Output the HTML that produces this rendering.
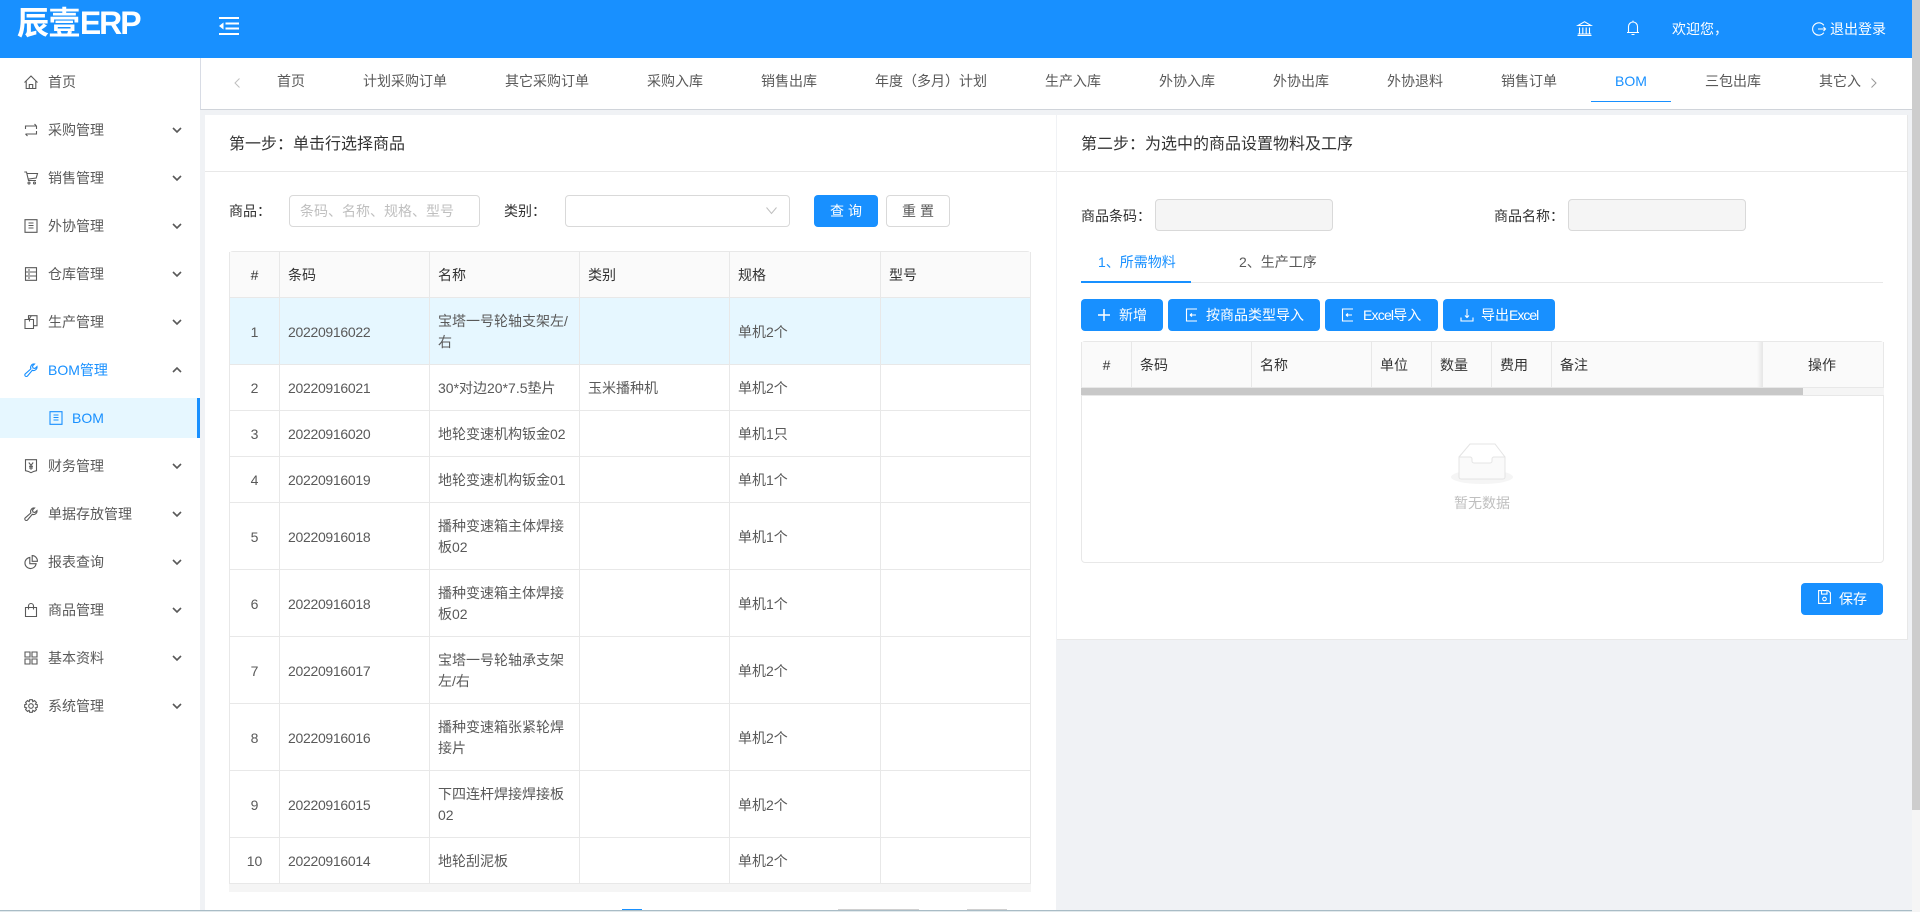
<!DOCTYPE html>
<html lang="zh-CN">
<head>
<meta charset="utf-8">
<title>辰壹ERP</title>
<style>
*{box-sizing:border-box}
html,body{margin:0;padding:0;width:1920px;height:912px;overflow:hidden;background:#f0f2f5}
body{position:relative;font-family:"Liberation Sans","Noto Sans CJK SC",sans-serif;font-size:14px;color:#595959}
.a{position:absolute}
.t{position:absolute;white-space:nowrap;line-height:20px;height:20px}
svg{position:absolute;fill:none;display:block;overflow:visible}
.m{left:48px;color:#595959}
.i{left:24px;width:14px;height:14px;stroke:#595959;stroke-width:1.1}
.c{left:172px;width:10px;height:6px;stroke:#595959;stroke-width:1.6}
.tab{top:71px;color:#595959}
.btn{position:absolute;background:#1890ff;border-radius:4px;height:32px}
.w{color:#fff}
.iw{stroke:#fff;stroke-width:1.1;width:14px;height:14px}
.dark{color:#333}
table{position:absolute;border-collapse:separate;border-spacing:0;table-layout:fixed;background:#fff}
td,th{border-right:1px solid #e8e8e8;border-bottom:1px solid #e8e8e8;padding:2px 0 0 8px;font-weight:400;text-align:left;vertical-align:middle;line-height:21px;overflow:hidden;white-space:nowrap}
th{background:#fafafa;color:#333}
td.n,th.n{text-align:center;padding:2px 0 0 0}
.num{letter-spacing:-.3px}
.r46 td{height:46px}
.r67 td{height:67px}
.sel td{background:#e6f7ff}
</style>
</head>
<body>

<!-- header -->
<div class="a" style="left:0;top:0;width:1912px;height:58px;background:#1890ff"></div>
<div class="t" style="left:17px;top:3px;height:40px;line-height:40px;font-size:32px;font-weight:700;color:#fff;letter-spacing:-.6px">辰壹<span style="letter-spacing:-2px">ERP</span></div>
<svg style="left:219px;top:17px;width:20px;height:18px" viewBox="0 0 20 18"><path d="M0 1h20M6.500 6.500h13.500M6.500 11.500h13.500M0 17h20" stroke="#fff" stroke-width="2"/><path d="M0 9l4.500-3.500v7z" fill="#fff"/></svg>
<svg class="iw" style="left:1577px;top:21px;width:15px;height:15px" viewBox="0 0 15 15"><path d="M7.500 .7L14 4.500H1zM2.500 6.500v6M5.800 6.500v6M9.200 6.500v6M12.500 6.500v6M.8 13h13.400M.5 14.500h14"/></svg>
<svg class="iw" style="left:1626px;top:20px;width:14px;height:16px" viewBox="0 0 14 16"><path d="M7 .6v1.400M2.500 12V6.500a4.500 4.500 0 0 1 9 0V12M1 12.500h12M5.500 14.500h3"/></svg>
<div class="t w" style="left:1672px;top:19px">欢迎您，</div>
<svg class="iw" style="left:1812px;top:22px" viewBox="0 0 14 14"><path d="M11.800 3.300A6.200 6.200 0 1 0 11.800 10.700M6 7h7.500M11.500 5l2 2-2 2"/></svg>
<div class="t w" style="left:1830px;top:19px">退出登录</div>

<!-- scrollbar -->
<div class="a" style="left:1912px;top:0;width:8px;height:912px;background:#f5f5f5"></div>
<div class="a" style="left:1912px;top:0;width:8px;height:810px;background:#cdcdcd"></div>

<!-- sidebar -->
<div class="a" style="left:0;top:58px;width:200px;height:854px;background:#fff"></div>
<div class="a" style="left:0;top:398px;width:200px;height:40px;background:#e6f7ff"></div>
<div class="a" style="left:197px;top:398px;width:3px;height:40px;background:#1890ff"></div>

<svg class="i" style="top:75px" viewBox="0 0 14 14"><path d="M.5 7.500L7 1l6.500 6.500M2.200 6.200V13.500h9.600V6.200M5.300 13.500V9.500h3.400v4"/></svg>
<div class="t m" style="top:72px">首页</div>

<svg class="i" style="top:123px" viewBox="0 0 14 14"><path d="M1.500 6V3h11M10.500 1l2 2M12.500 8v3h-11M3.500 13l-2-2"/><path d="M12.500 3v3"/></svg>
<div class="t m" style="top:120px">采购管理</div>
<svg class="c" style="top:127px" viewBox="0 0 10 6"><path d="M1 1l4 4 4-4"/></svg>

<svg class="i" style="top:171px" viewBox="0 0 14 14"><path d="M.3 1h2.200l2 8.500h7.500M2.800 2.500h10.700l-1.300 4.500-7.500 1"/><circle cx="5" cy="12" r="1"/><circle cx="10.500" cy="12" r="1"/></svg>
<div class="t m" style="top:168px">销售管理</div>
<svg class="c" style="top:175px" viewBox="0 0 10 6"><path d="M1 1l4 4 4-4"/></svg>

<svg class="i" style="top:219px;" viewBox="0 0 14 14"><path d="M1 .7h12v12.600H1zM4.500 4h5M4.500 6.500h5M4.500 9h5"/></svg>
<div class="t m" style="top:216px">外协管理</div>
<svg class="c" style="top:223px" viewBox="0 0 10 6"><path d="M1 1l4 4 4-4"/></svg>

<svg class="i" style="top:267px" viewBox="0 0 14 14"><path d="M1.500.7h11v12.600h-11zM1.500 5h11M1.500 9h11M4 3h2M4 7h2M4 11h2"/></svg>
<div class="t m" style="top:264px">仓库管理</div>
<svg class="c" style="top:271px" viewBox="0 0 10 6"><path d="M1 1l4 4 4-4"/></svg>

<svg class="i" style="top:315px" viewBox="0 0 14 14"><path d="M1 4.500h8.500v9H1zM4.500 4V.7h8.500v10h-3M5.500 6.500v-3l2-3"/></svg>
<div class="t m" style="top:312px">生产管理</div>
<svg class="c" style="top:319px" viewBox="0 0 10 6"><path d="M1 1l4 4 4-4"/></svg>

<svg class="i" style="top:363px;stroke:#1890ff" viewBox="0 0 14 14"><path d="M13 3.500a3.500 3.500 0 0 1-4.700 3.800L3.500 13a1.300 1.300 0 0 1-2.300-2.100l5.700-5A3.500 3.500 0 0 1 10.500 1L8.500 3l.5 2 2 .5z"/></svg>
<div class="t" style="left:48px;top:360px;color:#1890ff">BOM管理</div>
<svg class="c" style="top:367px" viewBox="0 0 10 6"><path d="M1 5l4-4 4 4"/></svg>

<svg class="i" style="left:49px;top:411px;stroke:#1890ff" viewBox="0 0 14 14"><path d="M1 .7h12v12.600H1zM4.500 4h5M4.500 6.500h5M4.500 9h5"/></svg>
<div class="t" style="left:72px;top:408px;color:#1890ff">BOM</div>

<svg class="i" style="top:459px" viewBox="0 0 14 14"><path d="M1.500.7h11v11l-3 .8-2.500 1.200-2.500-1.200-3-.8zM4.800 3.500L7 6.300l2.200-2.800M7 6.300v4.500M5 7.300h4M5 9h4"/></svg>
<div class="t m" style="top:456px">财务管理</div>
<svg class="c" style="top:463px" viewBox="0 0 10 6"><path d="M1 1l4 4 4-4"/></svg>

<svg class="i" style="top:507px" viewBox="0 0 14 14"><path d="M13 3.500a3.500 3.500 0 0 1-4.700 3.800L3.500 13a1.300 1.300 0 0 1-2.300-2.100l5.700-5A3.500 3.500 0 0 1 10.500 1L8.500 3l.5 2 2 .5z"/></svg>
<div class="t m" style="top:504px">单据存放管理</div>
<svg class="c" style="top:511px" viewBox="0 0 10 6"><path d="M1 1l4 4 4-4"/></svg>

<svg class="i" style="top:555px" viewBox="0 0 14 14"><path d="M5.800 2.400a5.600 5.600 0 1 0 6.300 6.300H5.800z"/><path d="M8.200.6a5.300 5.300 0 0 1 5.200 5.700H8.200z"/></svg>
<div class="t m" style="top:552px">报表查询</div>
<svg class="c" style="top:559px" viewBox="0 0 10 6"><path d="M1 1l4 4 4-4"/></svg>

<svg class="i" style="top:603px" viewBox="0 0 14 14"><path d="M1.500 4.500h11v9h-11zM4.500 6.500V3a2.500 2.500 0 0 1 5 0v3.500"/></svg>
<div class="t m" style="top:600px">商品管理</div>
<svg class="c" style="top:607px" viewBox="0 0 10 6"><path d="M1 1l4 4 4-4"/></svg>

<svg class="i" style="top:651px" viewBox="0 0 14 14"><path d="M1 1h5v5H1zM8 1h5v5H8zM1 8h5v5H1zM8 8h5v5H8z"/></svg>
<div class="t m" style="top:648px">基本资料</div>
<svg class="c" style="top:655px" viewBox="0 0 10 6"><path d="M1 1l4 4 4-4"/></svg>

<svg class="i" style="top:699px" viewBox="0 0 14 14"><path d="M5.700.7h2.600l.5 1.900 1.700-1 1.900 1.900-1 1.700 1.900.5v2.600l-1.900.5 1 1.700-1.900 1.900-1.700-1-.5 1.900H5.700l-.5-1.900-1.700 1-1.900-1.900 1-1.700L.7 8.300V5.700l1.900-.5-1-1.700 1.900-1.900 1.700 1z"/><circle cx="7" cy="7" r="2.300"/></svg>
<div class="t m" style="top:696px">系统管理</div>
<svg class="c" style="top:703px" viewBox="0 0 10 6"><path d="M1 1l4 4 4-4"/></svg>

<!-- tab bar -->
<div class="a" style="left:200px;top:58px;width:1712px;height:52px;background:#fff;border-left:1px solid #d8dce5;border-bottom:1px solid #d0d4da"></div>
<svg style="left:234px;top:78px;width:6px;height:10px;stroke:#bfbfbf;stroke-width:1" viewBox="0 0 6 10"><path d="M5.500 .5L1 5l4.500 4.500"/></svg>
<div class="t tab" style="left:277px">首页</div>
<div class="t tab" style="left:363px">计划采购订单</div>
<div class="t tab" style="left:505px">其它采购订单</div>
<div class="t tab" style="left:647px">采购入库</div>
<div class="t tab" style="left:761px">销售出库</div>
<div class="t tab" style="left:875px">年度（多月）计划</div>
<div class="t tab" style="left:1045px">生产入库</div>
<div class="t tab" style="left:1159px">外协入库</div>
<div class="t tab" style="left:1273px">外协出库</div>
<div class="t tab" style="left:1387px">外协退料</div>
<div class="t tab" style="left:1501px">销售订单</div>
<div class="t tab" style="left:1615px;color:#1890ff">BOM</div>
<div class="a" style="left:1591px;top:101px;width:80px;height:1px;background:#1890ff"></div>
<div class="t tab" style="left:1705px">三包出库</div>
<div class="t tab" style="left:1819px">其它入</div>
<svg style="left:1871px;top:78px;width:6px;height:10px;stroke:#999;stroke-width:1" viewBox="0 0 6 10"><path d="M.5 .5L5 5 .5 9.500"/></svg>

<!-- left panel -->
<div class="a" style="left:205px;top:115px;width:851px;height:795px;background:#fff"></div>
<div class="a" style="left:205px;top:171px;width:851px;height:1px;background:#e8e8e8"></div>
<div class="t dark" style="left:229px;top:135px;font-size:16px">第一步：单击行选择商品</div>

<div class="t dark" style="left:229px;top:201px">商品：</div>
<div class="a" style="left:289px;top:195px;width:191px;height:32px;border:1px solid #d9d9d9;border-radius:4px;background:#fff"></div>
<div class="t" style="left:300px;top:201px;color:#bfbfbf">条码、名称、规格、型号</div>
<div class="t dark" style="left:504px;top:201px">类别：</div>
<div class="a" style="left:565px;top:195px;width:225px;height:32px;border:1px solid #d9d9d9;border-radius:4px;background:#fff"></div>
<svg style="left:766px;top:207px;width:11px;height:7px;stroke:#bfbfbf;stroke-width:1" viewBox="0 0 11 7"><path d="M.5 .5l5 6 5-6"/></svg>
<div class="btn" style="left:814px;top:195px;width:64px"></div>
<div class="t w" style="left:830px;top:201px;letter-spacing:4px">查询</div>
<div class="a" style="left:886px;top:195px;width:64px;height:32px;border:1px solid #d9d9d9;border-radius:4px;background:#fff"></div>
<div class="t" style="left:902px;top:201px;letter-spacing:4px">重置</div>

<div class="a" style="left:229px;top:251px;width:802px;height:47px;border:1px solid #e8e8e8;border-bottom:0;border-radius:4px 4px 0 0;background:#fafafa"></div>
<table style="left:229px;top:252px;width:802px;border-left:1px solid #e8e8e8">
<colgroup><col style="width:50px"><col style="width:150px"><col style="width:150px"><col style="width:150px"><col style="width:151px"><col style="width:150px"></colgroup>
<tr class="r46"><th class="n" style="height:46px">#</th><th>条码</th><th>名称</th><th>类别</th><th>规格</th><th>型号</th></tr>
<tr class="r67 sel"><td class="n">1</td><td class="num">20220916022</td><td>宝塔一号轮轴支架左/<br>右</td><td></td><td>单机2个</td><td></td></tr>
<tr class="r46"><td class="n">2</td><td class="num">20220916021</td><td>30*对边20*7.5垫片</td><td>玉米播种机</td><td>单机2个</td><td></td></tr>
<tr class="r46"><td class="n">3</td><td class="num">20220916020</td><td>地轮变速机构钣金02</td><td></td><td>单机1只</td><td></td></tr>
<tr class="r46"><td class="n">4</td><td class="num">20220916019</td><td>地轮变速机构钣金01</td><td></td><td>单机1个</td><td></td></tr>
<tr class="r67"><td class="n">5</td><td class="num">20220916018</td><td>播种变速箱主体焊接<br>板02</td><td></td><td>单机1个</td><td></td></tr>
<tr class="r67"><td class="n">6</td><td class="num">20220916018</td><td>播种变速箱主体焊接<br>板02</td><td></td><td>单机1个</td><td></td></tr>
<tr class="r67"><td class="n">7</td><td class="num">20220916017</td><td>宝塔一号轮轴承支架<br>左/右</td><td></td><td>单机2个</td><td></td></tr>
<tr class="r67"><td class="n">8</td><td class="num">20220916016</td><td>播种变速箱张紧轮焊<br>接片</td><td></td><td>单机2个</td><td></td></tr>
<tr class="r67"><td class="n">9</td><td class="num">20220916015</td><td>下四连杆焊接焊接板<br>02</td><td></td><td>单机2个</td><td></td></tr>
<tr class="r46"><td class="n">10</td><td class="num">20220916014</td><td>地轮刮泥板</td><td></td><td>单机2个</td><td></td></tr>
</table>
<div class="a" style="left:229px;top:884px;width:802px;height:8px;background:#f5f5f5"></div>

<!-- right panel -->
<div class="a" style="left:1057px;top:115px;width:851px;height:525px;background:#fff;border-bottom:1px solid #e8e8e8;border-right:1px solid #e8e8e8"></div>
<div class="a" style="left:1057px;top:171px;width:850px;height:1px;background:#e8e8e8"></div>
<div class="t dark" style="left:1081px;top:135px;font-size:16px">第二步：为选中的商品设置物料及工序</div>

<div class="t dark" style="left:1081px;top:206px">商品条码：</div>
<div class="a" style="left:1155px;top:199px;width:178px;height:32px;border:1px solid #d9d9d9;border-radius:4px;background:#f5f5f5"></div>
<div class="t dark" style="left:1494px;top:206px">商品名称：</div>
<div class="a" style="left:1568px;top:199px;width:178px;height:32px;border:1px solid #d9d9d9;border-radius:4px;background:#f5f5f5"></div>

<div class="t" style="left:1098px;top:252px;color:#1890ff">1、所需物料</div>
<div class="t" style="left:1239px;top:252px">2、生产工序</div>
<div class="a" style="left:1081px;top:282px;width:802px;height:1px;background:#e8e8e8"></div>
<div class="a" style="left:1081px;top:281px;width:110px;height:2px;background:#1890ff"></div>

<div class="btn" style="left:1081px;top:299px;width:82px"></div>
<svg class="iw" style="left:1098px;top:309px;width:12px;height:12px;stroke-width:1.5" viewBox="0 0 12 12"><path d="M6 0v12M0 6h12"/></svg>
<div class="t w" style="left:1119px;top:305px">新增</div>

<div class="btn" style="left:1168px;top:299px;width:152px"></div>
<svg class="iw" style="left:1185px;top:308px" viewBox="0 0 14 14"><path d="M12 1H1.500v12H12M5 7h6M5 7l2-1.500M5 7l2 1.500"/></svg>
<div class="t w" style="left:1206px;top:305px">按商品类型导入</div>

<div class="btn" style="left:1325px;top:299px;width:113px"></div>
<svg class="iw" style="left:1341px;top:308px" viewBox="0 0 14 14"><path d="M12 1H1.500v12H12M5 7h6M5 7l2-1.500M5 7l2 1.500"/></svg>
<div class="t w" style="left:1363px;top:305px"><span style="letter-spacing:-.8px">Excel</span>导入</div>

<div class="btn" style="left:1443px;top:299px;width:112px"></div>
<svg class="iw" style="left:1460px;top:308px" viewBox="0 0 14 14"><path d="M7 1v8.500M5 7.500l2 2 2-2M1 9.500V13h12V9.500"/></svg>
<div class="t w" style="left:1481px;top:305px">导出<span style="letter-spacing:-1px">Excel</span></div>

<div class="a" style="left:1081px;top:341px;width:803px;height:47px;border:1px solid #e8e8e8;border-bottom:0;border-radius:4px 4px 0 0;background:#fafafa"></div>
<table style="left:1081px;top:342px;width:803px;border-left:1px solid #e8e8e8">
<colgroup><col style="width:50px"><col style="width:120px"><col style="width:120px"><col style="width:60px"><col style="width:60px"><col style="width:60px"><col></colgroup>
<tr><th class="n" style="height:46px">#</th><th>条码</th><th>名称</th><th>单位</th><th>数量</th><th>费用</th><th>备注</th></tr>
</table>
<div class="a" style="left:1757px;top:342px;width:5px;height:45px;background:linear-gradient(to right,rgba(0,0,0,0),rgba(0,0,0,.07))"></div>
<div class="a" style="left:1762px;top:342px;width:122px;height:46px;background:#fafafa;border-bottom:1px solid #e8e8e8;border-right:1px solid #e8e8e8;border-left:1px solid #e8e8e8"></div>
<div class="t dark" style="left:1808px;top:355px">操作</div>
<div class="a" style="left:1081px;top:388px;width:803px;height:8px;background:#f5f5f5"></div>
<div class="a" style="left:1081px;top:388px;width:722px;height:7px;background:#c8c8c8"></div>
<div class="a" style="left:1081px;top:395px;width:803px;height:168px;border:1px solid #e8e8e8;border-radius:0 0 4px 4px;background:#fff"></div>
<svg style="left:1450px;top:443px;width:64px;height:41px" viewBox="0 0 64 41">
<ellipse cx="32" cy="34" rx="31" ry="7" fill="#f5f5f5"/>
<path d="M9 14L20 1h25l10 13" stroke="#e4e4e4" fill="#fff"/>
<path d="M9 14h11a2 2 0 0 1 2 2v2a2 2 0 0 0 2 2h16a2 2 0 0 0 2-2v-2a2 2 0 0 1 2-2h11v20a2 2 0 0 1-2 2H11a2 2 0 0 1-2-2z" stroke="#e4e4e4" fill="#fafafa"/>
</svg>
<div class="t" style="left:1454px;top:493px;color:#bfbfbf">暂无数据</div>

<div class="btn" style="left:1801px;top:583px;width:82px"></div>
<svg class="iw" style="left:1818px;top:590px;width:13px;height:14px" viewBox="0 0 13 14"><path d="M.6.600h9.500l2.300 2.300v10.500H.6zM3.500.600v3.500h5.500V.600"/><circle cx="6.500" cy="9" r="1.800"/></svg>
<div class="t w" style="left:1839px;top:589px">保存</div>

<!-- bottom edge -->
<div class="a" style="left:622px;top:909px;width:20px;height:2px;background:#1890ff"></div>
<div class="a" style="left:838px;top:909px;width:81px;height:1px;background:#d0d0d0"></div>
<div class="a" style="left:967px;top:909px;width:40px;height:1px;background:#d0d0d0"></div>
<div class="a" style="left:0;top:910px;width:1912px;height:1px;background:#a9bcc6"></div>
<div class="a" style="left:0;top:911px;width:1912px;height:1px;background:#e2e9ec"></div>
</body>
</html>
